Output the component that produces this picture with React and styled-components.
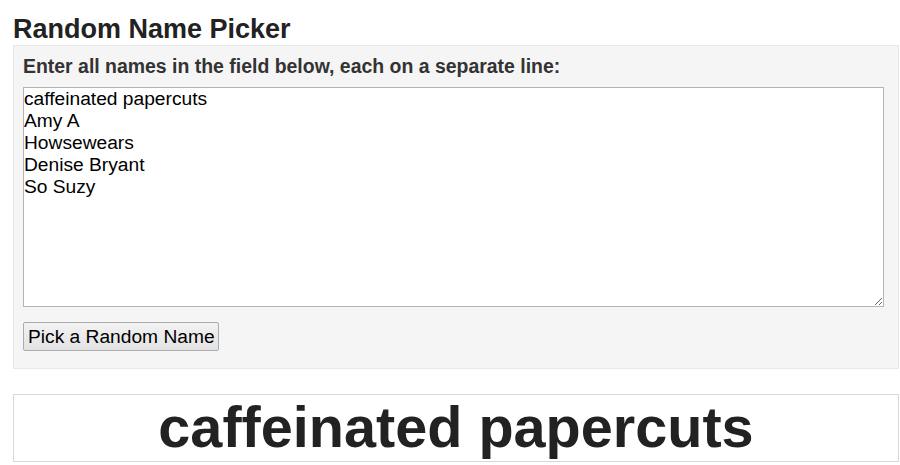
import styled, { createGlobalStyle } from "styled-components";

const GlobalStyle = createGlobalStyle`
  html, body {
    margin: 0;
    padding: 0;
    background: #fff;
  }
  body {
    font-family: "Liberation Sans", Arial, sans-serif;
  }
`;

const Page = styled.div`
  width: 886px;
  padding: 14px 0 0 13px;
`;

const Title = styled.h2`
  margin: 0;
  font-size: 27px;
  font-weight: 700;
  line-height: 31px;
  color: #222;
`;

const Panel = styled.div`
  box-sizing: border-box;
  background: #f5f5f5;
  border: 1px solid #e8e8e8;
  padding: 9px 14px 17px 9px;
  display: flex;
  flex-direction: column;
  align-items: flex-start;
`;

const Label = styled.label`
  font-size: 19.45px;
  font-weight: 700;
  line-height: 22px;
  color: #333;
  margin-bottom: 10px;
`;

const Names = styled.textarea`
  box-sizing: border-box;
  width: 861px;
  height: 220px;
  margin: 0 0 15px 0;
  padding: 0;
  border: 1px solid #b4b4b4;
  background: #fff;
  font-family: "Liberation Sans", Arial, sans-serif;
  font-size: 19.2px;
  line-height: 22px;
  color: #000;
  resize: both;
  outline: none;
`;

const PickButton = styled.button`
  box-sizing: border-box;
  height: 29px;
  padding: 0 3px 0 4px;
  border: 1px solid #acacac;
  border-radius: 2px;
  background: linear-gradient(#f2f2f2, #e3e3e3);
  font-family: "Liberation Sans", Arial, sans-serif;
  font-size: 19.2px;
  line-height: 22px;
  color: #000;
  cursor: pointer;
`;

const Result = styled.div`
  box-sizing: border-box;
  margin-top: 25px;
  height: 68px;
  border: 1px solid #d8d8d8;
  background: #fff;
  text-align: center;
  font-size: 57.6px;
  font-weight: 700;
  line-height: 64px;
  color: #222;
  overflow: hidden;
`;

const names = [
  "caffeinated papercuts",
  "Amy A",
  "Howsewears",
  "Denise Bryant",
  "So Suzy",
];

export default function App() {
  return (
    <>
      <GlobalStyle />
      <Page>
        <Title>Random Name Picker</Title>
        <Panel>
          <Label htmlFor="names">
            Enter all names in the field below, each on a separate line:
          </Label>
          <Names id="names" defaultValue={names.join("\n")} spellCheck={false} />
          <PickButton>Pick a Random Name</PickButton>
        </Panel>
        <Result>caffeinated papercuts</Result>
      </Page>
    </>
  );
}
